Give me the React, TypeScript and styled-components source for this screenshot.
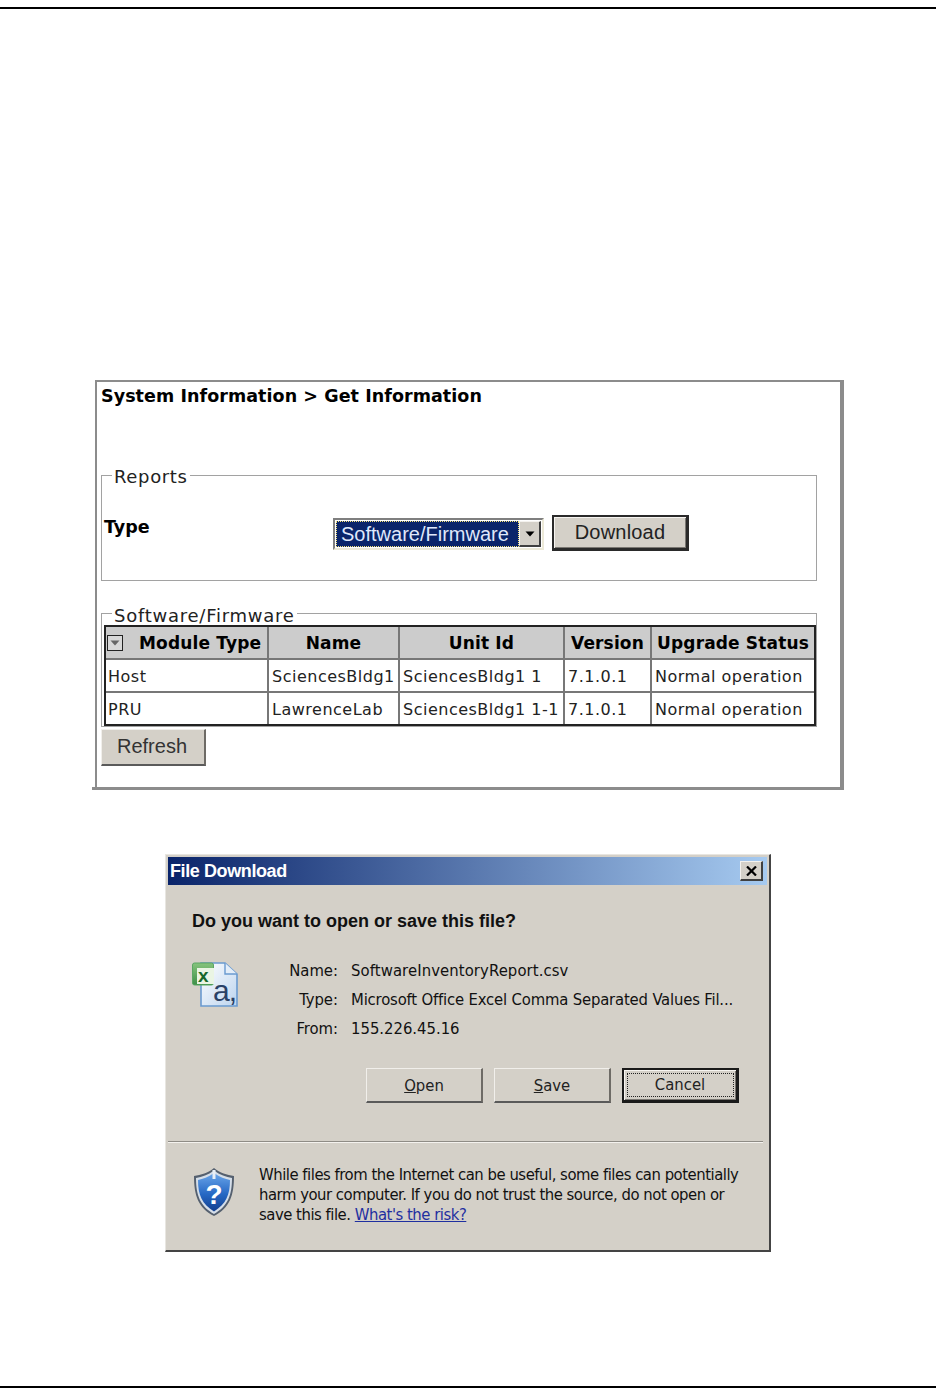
import React, { FC } from "react";
import styled, { createGlobalStyle } from "styled-components";

const GlobalStyle = createGlobalStyle`
  html, body {
    margin: 0;
    padding: 0;
    background: #fff;
  }
  body {
    font-family: "Liberation Sans", Arial, sans-serif;
  }
`;

const rows = [
  { type: "Host", name: "SciencesBldg1", unit: "SciencesBldg1 1", version: "7.1.0.1", status: "Normal operation" },
  { type: "PRU", name: "LawrenceLab", unit: "SciencesBldg1 1-1", version: "7.1.0.1", status: "Normal operation" },
];

const ExcelIcon: FC = () => (
  <svg width="46" height="46" viewBox="0 0 46 46">
    <defs>
      <linearGradient id="docFill" x1="0" y1="0" x2="1" y2="1">
        <stop offset="0" stopColor="#ffffff" />
        <stop offset="1" stopColor="#bcd4ef" />
      </linearGradient>
      <linearGradient id="xlFill" x1="0" y1="0" x2="0" y2="1">
        <stop offset="0" stopColor="#86c47d" />
        <stop offset="1" stopColor="#3d8f48" />
      </linearGradient>
    </defs>
    <path d="M9 2H33L45 13V45H9Z" fill="url(#docFill)" stroke="#6a9ad0" strokeWidth="1.6" />
    <path d="M33 2V13H45" fill="#e4eef9" stroke="#6a9ad0" strokeWidth="1.4" />
    <rect x="0.5" y="2" width="21" height="22" rx="2" fill="url(#xlFill)" stroke="#5aa663" />
    <rect x="5" y="7" width="17" height="16" fill="#eaf5e4" />
    <text x="6" y="21" fontFamily="Liberation Sans" fontWeight="700" fontSize="19" fill="#17672a">x</text>
    <text x="21" y="40" fontFamily="Liberation Sans" fontSize="30" letterSpacing="-1" fill="#2a4166">a,</text>
  </svg>
);

const ShieldIcon: FC = () => (
  <svg width="42" height="50" viewBox="0 0 42 50">
    <defs>
      <linearGradient id="shieldFill" x1="0" y1="0" x2="0" y2="1">
        <stop offset="0" stopColor="#6ba6ea" />
        <stop offset="0.55" stopColor="#2668c4" />
        <stop offset="1" stopColor="#123f8f" />
      </linearGradient>
    </defs>
    <path d="M21 1C27 6 34 8 41 9C41 28 37 41 21 49C5 41 1 28 1 9C8 8 15 6 21 1Z" fill="#55606f" />
    <path d="M21 3.5C27 8 33 10 39 11C39 28 35 39 21 47C7 39 3 28 3 11C9 10 15 8 21 3.5Z" fill="#d5dee9" />
    <path d="M21 6C27 10 32 12 37 13C37 28 33 37 21 44.5C9 37 5 28 5 13C10 12 15 10 21 6Z" fill="url(#shieldFill)" />
    <rect x="19.5" y="3" width="3" height="9" fill="#e9eff6" />
    <text x="21" y="37" textAnchor="middle" fontFamily="Liberation Sans" fontWeight="700" fontSize="28" fill="#fff">?</text>
  </svg>
);

const App: FC = () => {
  return (
    <>
      <GlobalStyle />
      <Page>
        <Rule />
        <Panel>
          <Heading>System Information &gt; Get Information</Heading>
          <ReportsBox>
            <BoxLegend>Reports</BoxLegend>
            <TypeRow>
              <TypeLabel>Type</TypeLabel>
              <SelectBox>
                <SelectValue>Software/Firmware</SelectValue>
                <SelectArrow>
                  <svg width="10" height="6" viewBox="0 0 10 6">
                    <path d="M0.5 0.5H9.5L5 5.5Z" fill="#000" />
                  </svg>
                </SelectArrow>
              </SelectBox>
              <DownloadButton>Download</DownloadButton>
            </TypeRow>
          </ReportsBox>
          <InventoryBox>
            <InventoryLegend>Software/Firmware</InventoryLegend>
            <Table>
              <colgroup>
                <col style={{ width: 163 }} />
                <col style={{ width: 131 }} />
                <col style={{ width: 165 }} />
                <col style={{ width: 87 }} />
                <col style={{ width: 162 }} />
              </colgroup>
              <thead>
                <tr>
                  <HeadCell>
                    <ModuleHead>
                      <SortBox>
                        <svg width="10" height="6" viewBox="0 0 10 6">
                          <path d="M0.5 0.5H9.5L5 5.5Z" fill="#666" />
                        </svg>
                      </SortBox>
                      Module Type
                    </ModuleHead>
                  </HeadCell>
                  <HeadCell>Name</HeadCell>
                  <HeadCell>Unit Id</HeadCell>
                  <HeadCell>Version</HeadCell>
                  <HeadCell>Upgrade Status</HeadCell>
                </tr>
              </thead>
              <tbody>
                {rows.map((row) => (
                  <tr key={row.type}>
                    <BodyCell>{row.type}</BodyCell>
                    <BodyCell>{row.name}</BodyCell>
                    <BodyCell>{row.unit}</BodyCell>
                    <BodyCell>{row.version}</BodyCell>
                    <BodyCell>{row.status}</BodyCell>
                  </tr>
                ))}
              </tbody>
            </Table>
          </InventoryBox>
          <RefreshButton>Refresh</RefreshButton>
        </Panel>

        <Dialog>
          <TitleBar>
            <TitleText>File Download</TitleText>
            <CloseButton>
              <svg width="11" height="10" viewBox="0 0 11 10">
                <path d="M1 0.5L10 9.5M10 0.5L1 9.5" stroke="#000" strokeWidth="2.2" />
              </svg>
            </CloseButton>
          </TitleBar>
          <Question>Do you want to open or save this file?</Question>
          <FileRow>
            <IconSlot>
              <ExcelIcon />
            </IconSlot>
            <FileGrid>
              <FileLabel>Name:</FileLabel>
              <FileValue $spacing={0.1}>SoftwareInventoryReport.csv</FileValue>
              <FileLabel>Type:</FileLabel>
              <FileValue $spacing={-0.17}>Microsoft Office Excel Comma Separated Values Fil...</FileValue>
              <FileLabel>From:</FileLabel>
              <FileValue>155.226.45.16</FileValue>
            </FileGrid>
          </FileRow>
          <ButtonRow>
            <DialogButton>
              <u>O</u>pen
            </DialogButton>
            <DialogButton>
              <u>S</u>ave
            </DialogButton>
            <DialogButton $focused>
              <FocusRing>Cancel</FocusRing>
            </DialogButton>
          </ButtonRow>
          <Separator />
          <WarningRow>
            <ShieldSlot>
              <ShieldIcon />
            </ShieldSlot>
            <WarningText>
              While files from the Internet can be useful, some files can potentially
              <br />
              harm your computer. If you do not trust the source, do not open or
              <br />
              save this file. <RiskLink>What's the risk?</RiskLink>
            </WarningText>
          </WarningRow>
        </Dialog>
        <BottomRule />
      </Page>
    </>
  );
};

// Style
const Page = styled.div`
  width: 936px;
  height: 1394px;
  padding-top: 7px;
  box-sizing: border-box;
  overflow: hidden;
`;

const Rule = styled.div`
  height: 2px;
  background: #000;
`;

const BottomRule = styled(Rule)`
  margin-top: 134px;
`;

const Panel = styled.div`
  position: relative;
  box-sizing: border-box;
  width: 749px;
  height: 410px;
  margin: 371px 0 0 95px;
  padding: 4px 0 0 4px;
  background: #fff;
  border-style: solid;
  border-color: #8c8c8c;
  border-width: 2px 4px 3px 2px;
  font-family: "DejaVu Sans", Verdana, sans-serif;
  color: #000;

  &::after {
    content: "";
    position: absolute;
    left: -5px;
    bottom: -3px;
    width: 3px;
    height: 3px;
    background: #8c8c8c;
  }
`;

const Heading = styled.div`
  height: 20px;
  font-size: 17.5px;
  line-height: 20px;
  font-weight: 700;
  letter-spacing: 0.06px;
  white-space: nowrap;
`;

const ReportsBox = styled.fieldset`
  box-sizing: border-box;
  width: 716px;
  height: 116px;
  margin: 59px 0 0;
  padding: 0 0 0 2px;
  border: 1.5px solid #a2a2a2;
`;

const InventoryBox = styled(ReportsBox)`
  height: 124px;
  margin-top: 22px;
`;

const BoxLegend = styled.legend`
  height: 20px;
  margin-left: 8px;
  padding: 0 2px;
  font-family: "DejaVu Sans", Verdana, sans-serif;
  font-size: 18px;
  line-height: 24px;
  letter-spacing: 0.65px;
  color: #222;
`;

const InventoryLegend = styled(BoxLegend)`
  line-height: 26px;
  letter-spacing: 0.75px;
`;

const TypeRow = styled.div`
  display: flex;
  align-items: flex-start;
  height: 60px;
  margin-top: 30px;
`;

const TypeLabel = styled.div`
  width: 229px;
  margin-top: 1px;
  font-size: 17.5px;
  line-height: 22px;
  font-weight: 700;
`;

const SelectBox = styled.div`
  box-sizing: border-box;
  display: flex;
  width: 211px;
  height: 32px;
  margin-top: 3px;
  padding: 1px;
  border-style: solid;
  border-width: 2px;
  border-color: #7f7f7f #ece9d8 #ece9d8 #7f7f7f;
  background: #fff;
`;

const SelectValue = styled.div`
  flex: 1;
  box-sizing: border-box;
  padding: 1px 0 0 5px;
  background: #0a246a;
  outline: 1px dotted #f5e27a;
  outline-offset: -1px;
  color: #dfe8fb;
  font-family: "Liberation Sans", Arial, sans-serif;
  font-size: 20px;
  line-height: 25px;
  white-space: nowrap;
`;

const SelectArrow = styled.div`
  display: flex;
  align-items: center;
  justify-content: center;
  box-sizing: border-box;
  width: 22px;
  background: #d4d0c8;
  border-style: solid;
  border-width: 1px 2px 2px 1px;
  border-color: #f4f2ee #404040 #404040 #f4f2ee;
`;

const FlatButton = styled.div`
  box-sizing: border-box;
  display: flex;
  align-items: center;
  justify-content: center;
  background: #d4d0c8;
  color: #222;
  font-family: "Liberation Sans", Arial, sans-serif;
  font-size: 20px;
  border-style: solid;
  border-width: 1px 2px 2px 1px;
  border-color: #f1efeb #6e6b66 #5a5a5a #f1efeb;
`;

const DownloadButton = styled(FlatButton)`
  width: 137px;
  height: 36px;
  margin-left: 8px;
  border-width: 2px 3px 3px 2px;
  border-color: #2a2a2a;
  box-shadow: inset 1px 1px 0 #f6f4f0, inset -1px -1px 0 #7a7772;
  padding-bottom: 1px;
  letter-spacing: 0.2px;
`;

const RefreshButton = styled(FlatButton)`
  width: 105px;
  height: 37px;
  margin-top: 2px;
  padding: 0 2px 2px 0;
  color: #333;
`;

const Table = styled.table`
  box-sizing: border-box;
  width: 712px;
  height: 101px;
  margin-top: 2px;
  table-layout: fixed;
  border-collapse: separate;
  border-spacing: 0;
  border: 2px solid #222;
`;

const HeadCell = styled.th`
  box-sizing: border-box;
  height: 33px;
  padding: 1px 0 0;
  background: #cccccc;
  border-right: 2px solid #777;
  border-bottom: 2px solid #777;
  font-size: 17px;
  font-weight: 700;
  text-align: center;
  white-space: nowrap;
  letter-spacing: 0.15px;

  &:last-child {
    border-right: 0;
  }
`;

const ModuleHead = styled.div`
  display: flex;
  align-items: center;
  padding-left: 1px;
`;

const SortBox = styled.span`
  display: inline-flex;
  align-items: center;
  justify-content: center;
  box-sizing: border-box;
  width: 16px;
  height: 16px;
  margin-right: 16px;
  background: #d8d8d8;
  border: 1.5px solid #222;
`;

const BodyCell = styled.td`
  box-sizing: border-box;
  height: 33px;
  padding: 2px 0 0 3px;
  border-right: 2px solid #777;
  border-bottom: 2px solid #777;
  font-size: 16px;
  white-space: nowrap;
  color: #222;
  letter-spacing: 0.5px;

  &:first-child {
    padding-left: 2px;
  }
  &:last-child {
    border-right: 0;
  }
  tr:last-child > & {
    height: 31px;
    border-bottom: 0;
  }
`;

const Dialog = styled.div`
  box-sizing: border-box;
  display: flex;
  flex-direction: column;
  width: 606px;
  height: 398px;
  margin: 64px 0 0 165px;
  padding: 2px;
  background: #d4d0c8;
  border-style: solid;
  border-width: 1px 2px 2px 1px;
  border-color: #e8e6e1 #444 #444 #e8e6e1;
  font-family: "Liberation Sans", Arial, sans-serif;
  color: #111;
`;

const TitleBar = styled.div`
  display: flex;
  flex: none;
  align-items: center;
  justify-content: space-between;
  height: 28px;
  padding: 0 4px 0 2px;
  background: linear-gradient(90deg, #0a246a, #a6caf0);
`;

const TitleText = styled.div`
  color: #fff;
  font-size: 18px;
  font-weight: 700;
  letter-spacing: -0.4px;
`;

const CloseButton = styled.div`
  display: flex;
  align-items: center;
  justify-content: center;
  box-sizing: border-box;
  width: 23px;
  height: 20px;
  background: #d4d0c8;
  border-style: solid;
  border-width: 1px 2px 2px 1px;
  border-color: #f4f2ee #404040 #404040 #f4f2ee;
`;

const Question = styled.div`
  margin: 25px 0 0 24px;
  font-size: 18px;
  line-height: 22px;
  font-weight: 700;
`;

const FileRow = styled.div`
  display: flex;
  margin: 27px 0 0 25px;
`;

const IconSlot = styled.div`
  flex: none;
  width: 45px;
  margin-top: 2px;
  margin-left: -1px;
`;

const FileGrid = styled.div`
  display: grid;
  grid-template-columns: 101px auto;
  column-gap: 13px;
  grid-auto-rows: 29px;
  font-family: "DejaVu Sans Condensed", "DejaVu Sans", sans-serif;
  font-size: 16.5px;
  line-height: 24px;
`;

const FileLabel = styled.div`
  text-align: right;
`;

const FileValue = styled.div<{ $spacing?: number }>`
  white-space: nowrap;
  letter-spacing: ${(p) => p.$spacing ?? 0}px;
`;

const ButtonRow = styled.div`
  display: flex;
  gap: 11px;
  margin: 22px 0 0 198px;
`;

const DialogButton = styled(FlatButton)<{ $focused?: boolean }>`
  width: 117px;
  height: 35px;
  font-family: "DejaVu Sans Condensed", "DejaVu Sans", sans-serif;
  font-size: 16.5px;
  ${(p) =>
    p.$focused &&
    `
    border-width: 2px 3px 3px 2px;
    border-color: #1a1a1a;
    box-shadow: inset 1px 1px 0 #f6f4f0, inset -1px -1px 0 #7a7772;
  `}
`;

const FocusRing = styled.div`
  box-sizing: border-box;
  display: flex;
  align-items: center;
  justify-content: center;
  width: 107px;
  height: 24px;
  border: 1px dotted #222;
  padding-bottom: 2px;
`;

const Separator = styled.div`
  flex: none;
  width: 595px;
  height: 2px;
  margin-top: 38px;
  background: #8f8c86;
  border-bottom: 1px solid #f4f2ee;
  box-sizing: border-box;
`;

const WarningRow = styled.div`
  display: flex;
  margin: 22px 0 0 25px;
`;

const ShieldSlot = styled.div`
  flex: none;
  width: 66px;
  margin-top: 2px;
`;

const WarningText = styled.div`
  font-family: "DejaVu Sans Condensed", "DejaVu Sans", sans-serif;
  font-size: 16.5px;
  line-height: 20px;
  letter-spacing: -0.47px;
  white-space: nowrap;
`;

const RiskLink = styled.a`
  color: #1f2fa0;
  text-decoration: underline;
`;

export default App;
